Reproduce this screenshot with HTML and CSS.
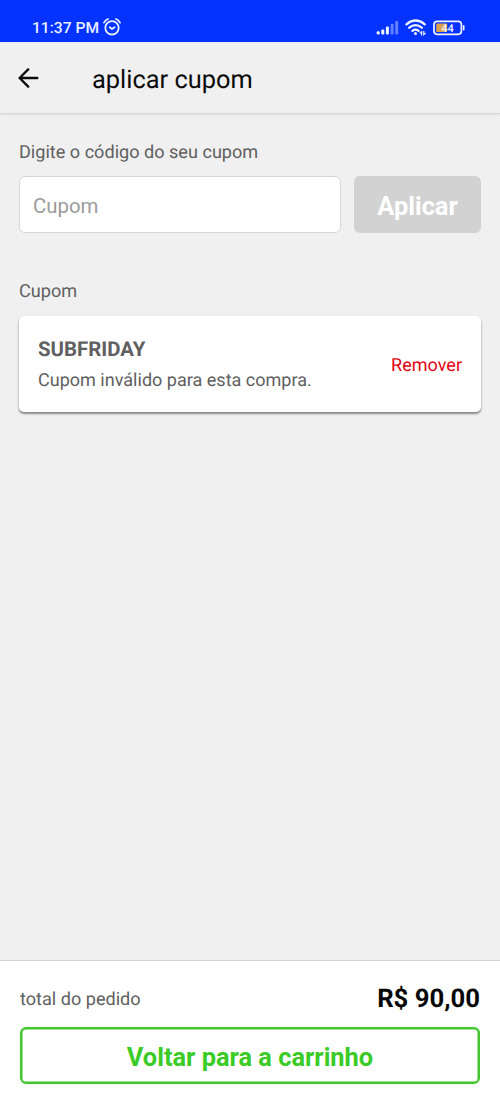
FILE: index.html
```html
<!DOCTYPE html>
<html lang="pt-BR">
<head>
<meta charset="utf-8">
<meta name="viewport" content="width=device-width, initial-scale=1">
<title>aplicar cupom</title>
<link rel="stylesheet" href="styles.css">
</head>
<body>
<div class="screen">
  <div class="status">
    <span class="clock">11:37 PM</span>
    <svg class="alarm" width="18" height="18" viewBox="0 0 18 18" fill="none" stroke="#e8efff" stroke-width="1.8" stroke-linecap="round" stroke-linejoin="round">
      <circle cx="9" cy="9.8" r="6.7"/>
      <path d="M1 4.6Q2.5 2 5 1M17 4.6Q15.5 2 13 1M6.8 9.2L9 11l2.6-1.8"/>
    </svg>
    <div class="indicators">
      <svg width="23" height="15" viewBox="0 0 23 15" fill="#f0f4ff">
        <rect x="0.7" y="11.2" width="3" height="3.4" rx="1"/>
        <rect x="5.3" y="9.5" width="3" height="5.1" rx="1"/>
        <rect x="9.9" y="6.6" width="3" height="8" rx="1"/>
        <rect x="14.6" y="3.8" width="3" height="10.8" rx="1" opacity=".4"/>
        <rect x="19.2" y="1" width="3" height="13.6" rx="1" opacity=".4"/>
      </svg>
      <svg class="wifi" width="22" height="17" viewBox="0 0 22 17" fill="none" stroke="#f0f4ff" stroke-width="2.3" stroke-linecap="round">
        <path d="M1.4 5.3Q10.5-2.2 19.8 5.3M4.3 8.7Q10.5 3.5 16.8 8.7M7.4 11.8Q10.5 9.4 13.6 11.8"/>
        <circle cx="10.5" cy="14.4" r="1.5" fill="#f0f4ff" stroke="none"/>
        <path d="M16.6 16v-3.3l-1.4 1.2M18.8 12.4v3.2l1.4-1.2" stroke-width="1.2"/>
      </svg>
      <svg width="32" height="16" viewBox="0 0 32 16">
        <rect x="1" y="1.3" width="27.4" height="13" rx="3.2" fill="none" stroke="#f0f4ff" stroke-width="1.7"/>
        <rect x="3.2" y="3.6" width="11" height="8.4" rx="1" fill="#dda04b"/>
        <path d="M30.7 5.8v4" stroke="#f0f4ff" stroke-width="1.6" stroke-linecap="round"/>
        <text class="charge" x="14.4" y="11.7" text-anchor="middle">44</text>
      </svg>
    </div>
  </div>
  <header class="appbar">
    <svg class="arrow" width="21" height="20" viewBox="0 0 21 20" fill="none" stroke="#0b0b0b" stroke-width="2.3" stroke-linecap="round" stroke-linejoin="round">
      <path d="M19.4 10H1.6M10.2 1.4L1.6 10l8.6 8.6"/>
    </svg>
    <h1 class="title">aplicar cupom</h1>
  </header>
  <main class="content">
    <label class="label" for="code">Digite o código do seu cupom</label>
    <div class="form">
      <input class="field" id="code" type="text" placeholder="Cupom">
      <button class="apply" type="button">Aplicar</button>
    </div>
    <h2 class="label">Cupom</h2>
    <section class="card">
      <div>
        <div class="code">SUBFRIDAY</div>
        <div class="message">Cupom inválido para esta compra.</div>
      </div>
      <a class="remove">Remover</a>
    </section>
  </main>
  <footer class="footer">
    <div class="total">
      <span class="total-label">total do pedido</span>
      <span class="amount">R$ 90,00</span>
    </div>
    <button class="back" type="button">Voltar para a carrinho</button>
  </footer>
</div>
</body>
</html>
```
FILE: styles.css
```css
* { box-sizing: border-box; }
body {
  margin: 0;
  font-family: Roboto, "Liberation Sans", sans-serif;
  color: #606060;
  text-rendering: geometricPrecision;
}
.screen {
  display: flex;
  flex-direction: column;
  height: 1111px;
  background: #f0f0f0;
}
.status {
  display: flex;
  align-items: center;
  height: 42px;
  padding: 13px 35px 0 32px;
  background: #0433ff;
  color: #e8efff;
}
.clock {
  width: 67px;
  font-size: 15.6px;
  font-weight: 500;
  line-height: 18px;
  white-space: nowrap;
}
.alarm { margin: -2px 0 0 3.5px; }
.indicators {
  display: flex;
  align-items: center;
  gap: 6px;
  margin-left: auto;
}
.charge {
  fill: #f0f4ff;
  font-size: 11px;
  font-weight: 500;
}
.appbar {
  display: flex;
  align-items: center;
  gap: 53px;
  height: 72px;
  padding: 0 18px;
  border-bottom: 1px solid #d6d6d6;
  box-shadow: 0 1px 2px rgba(0, 0, 0, .08);
}
.title {
  margin: 5px 0 0;
  color: #0b0b0b;
  font-size: 25.4px;
  font-weight: 400;
  line-height: 30px;
}
.content {
  flex: 1;
  padding: 28px 19px 0;
}
.label {
  display: block;
  margin: 0;
  font-size: 18.1px;
  font-weight: 400;
  line-height: 22px;
}
.form {
  display: flex;
  gap: 13px;
  margin: 12px 0 48px;
}
.field {
  width: 322px;
  height: 57px;
  padding: 2px 13px 0;
  border: 1px solid #d6d6d6;
  border-radius: 6px;
  background: #fff;
  font: 400 20.4px Roboto, sans-serif;
}
.field::placeholder { color: #9b9b9b; }
.apply {
  flex: 1;
  height: 57px;
  padding: 3px 0 0;
  border: 0;
  border-radius: 6px;
  background: #d2d2d2;
  color: #fff;
  font: 700 25.4px Roboto, sans-serif;
}
.card {
  display: flex;
  align-items: center;
  justify-content: space-between;
  height: 96px;
  margin-top: 13px;
  padding: 2px 19px 0;
  border-radius: 5px;
  background: #fff;
  box-shadow: 0 2px 2px rgba(0, 0, 0, .38), 0 1px 3px rgba(0, 0, 0, .12);
}
.code {
  font-size: 20.4px;
  font-weight: 700;
  line-height: 32px;
}
.message {
  font-size: 18.05px;
  line-height: 32px;
}
.remove {
  color: #e20613;
  font-size: 18.05px;
}
.footer {
  height: 151px;
  padding: 19px 20px 0;
  border-top: 1px solid #d2d2d2;
  background: #fff;
}
.total {
  display: flex;
  align-items: center;
  justify-content: space-between;
  height: 38px;
}
.total-label { font-size: 18.1px; }
.amount {
  color: #080808;
  font-size: 25.7px;
  font-weight: 700;
}
.back {
  width: 460px;
  height: 57px;
  margin-top: 9px;
  padding: 3px 0 0;
  border: 2px solid #42c52f;
  border-radius: 6px;
  background: #fff;
  box-shadow: inset 0 0 0 .5px #42c52f;
  color: #3bcb27;
  font: 700 25.4px Roboto, sans-serif;
}
```
